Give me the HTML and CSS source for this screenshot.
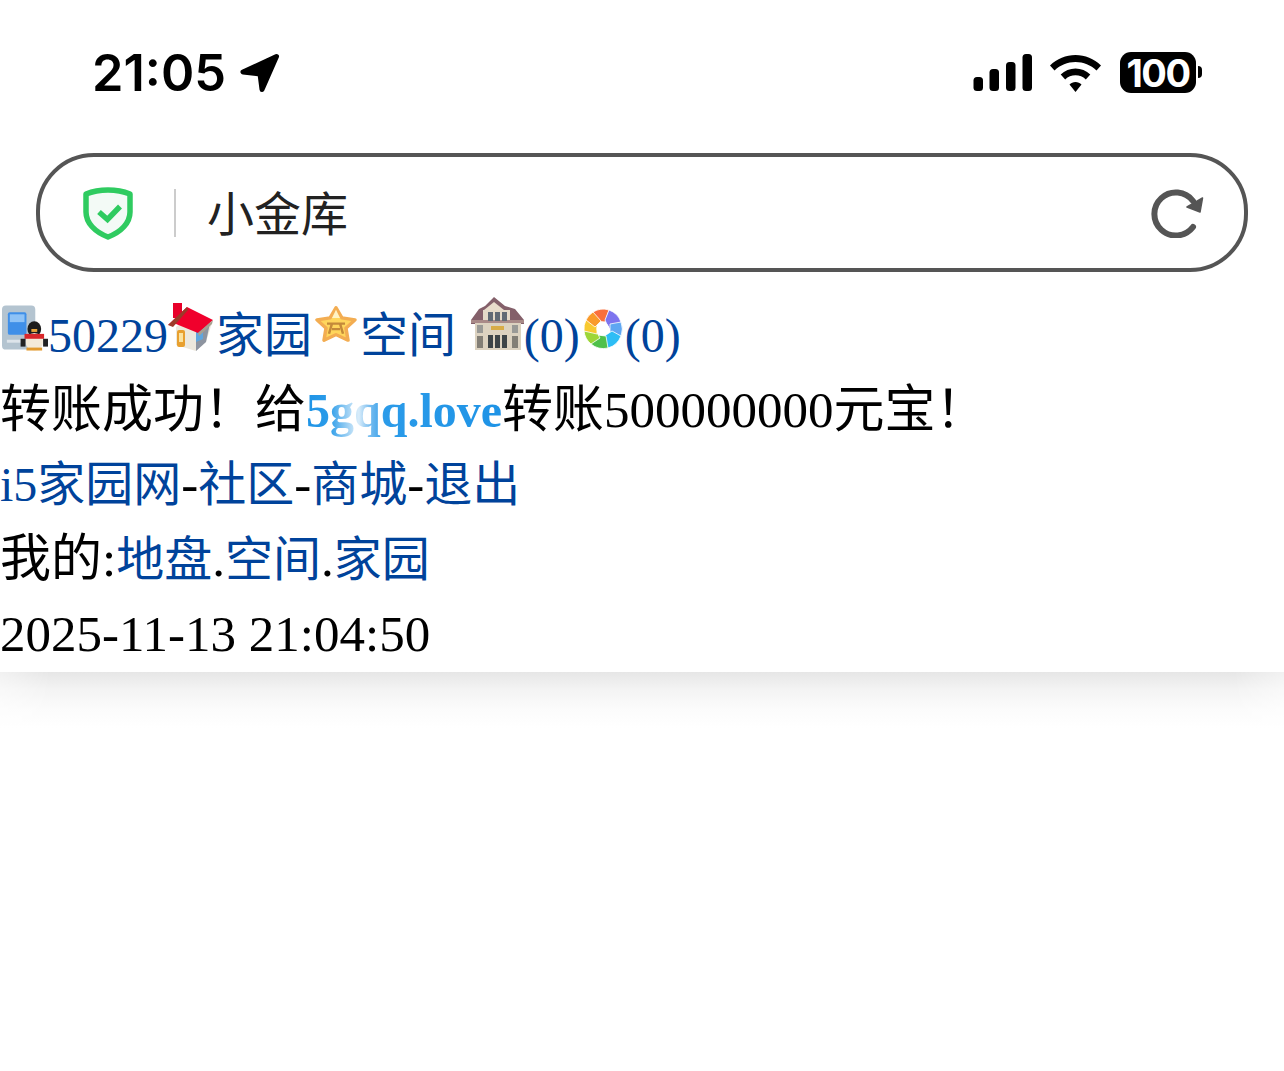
FILE: index.html
```html
<!DOCTYPE html>
<html lang="zh-CN">
<head>
  <meta charset="UTF-8" />
  <title>小金库</title>
  <meta name="viewport" content="width=device-width, initial-scale=1" />
  <link rel="stylesheet" href="styles.css">
</head>
<body>

  <!-- Status bar -->
  <header class="status-bar">
    <div class="status-left">
      <span class="clock">21:05</span>
      <svg class="arrow" viewBox="0 0 40 40"><path d="M36.500 3.500 L3 19 L20 21 L22 36.500 Z" fill="#000" stroke="#000" stroke-width="5" stroke-linejoin="round"/></svg>
    </div>
    <div class="status-right">
      <svg class="signal" viewBox="0 0 58 37">
        <rect x="0" y="23" width="9.500" height="14" rx="3.500"/>
        <rect x="16" y="15" width="9.500" height="22" rx="3.500"/>
        <rect x="32.500" y="8" width="9.500" height="29" rx="3.500"/>
        <rect x="49" y="0" width="9.500" height="37" rx="3.500"/>
      </svg>
      <svg class="wifi" viewBox="0 0 51 37">
        <path d="M25.500 0 C35 0 44 3.800 51 10.500 L46.500 15.500 C40.800 10 33.400 7 25.500 7 C17.600 7 10.200 10 4.500 15.500 L0 10.500 C7 3.800 16 0 25.500 0 Z"/>
        <path d="M25.500 13.500 C31 13.500 36.300 15.600 40.300 19.500 L35.800 24.400 C33 21.700 29.400 20.300 25.500 20.300 C21.600 20.300 18 21.700 15.200 24.400 L10.700 19.500 C14.700 15.600 20 13.500 25.500 13.500 Z"/>
        <path d="M25.500 27 C27.800 27 30 27.900 31.500 29.400 L25.500 37 L19.500 29.400 C21 27.900 23.200 27 25.500 27 Z"/>
      </svg>
      <div class="battery"><span class="battery-level">100</span></div>
      <span class="battery-cap"></span>
    </div>
  </header>

  <!-- Address bar -->
  <div class="address-bar">
    <svg class="shield" viewBox="0 0 50 53">
      <path d="M25 3 C32 3 40 4.200 47 7 L47 25 C47 36 38 45 25 50 C12 45 3 36 3 25 L3 7 C10 4.200 18 3 25 3 Z" fill="#f3faf6" stroke="#2fcb60" stroke-width="5.500" stroke-linejoin="round"/>
      <path d="M16 25 L24.500 32.500 L37 19.500" fill="none" stroke="#2fcb60" stroke-width="5.500"/>
    </svg>
    <span class="divider"></span>
    <span class="page-title">小金库</span>
    <svg class="reload" viewBox="0 0 54 50">
      <path d="M43 13 A21.500 21.500 0 1 0 43 39" fill="none" stroke="#555" stroke-width="6" stroke-linecap="round"/>
      <path d="M52.500 10 L37 19 L50 24 Z" fill="#555" stroke="#555" stroke-width="1.500" stroke-linejoin="round"/>
    </svg>
  </div>

  <!-- Page content -->
  <main class="content">
    <div class="line">
      <svg class="icon icon-qq" viewBox="0 0 47 47">
        <rect x="0" y="0" width="34" height="45" rx="4" fill="#b4c4d0"/>
        <rect x="6" y="7" width="19" height="23" rx="2" fill="#3f8fe8"/>
        <rect x="8" y="9" width="15" height="8" fill="#8ec2f6"/>
        <rect x="5" y="35" width="16" height="3" fill="#dde4ea"/>
        <ellipse cx="33" cy="24" rx="7" ry="8" fill="#1c1c1c"/>
        <ellipse cx="33" cy="37" rx="9" ry="9" fill="#f4ead8"/>
        <rect x="23" y="29" width="20" height="5" fill="#d9262a"/>
        <rect x="30" y="24" width="6" height="3" fill="#e8a33a"/>
        <rect x="19" y="34" width="5" height="8" fill="#222"/>
        <rect x="42" y="34" width="5" height="8" fill="#222"/>
        <rect x="25" y="43" width="16" height="3" fill="#e29a2e"/>
      </svg><a href="#">50229</a><svg class="icon icon-home" viewBox="0 0 46 49">
        <rect x="5" y="0" width="9" height="15" fill="#e8002a"/>
        <path d="M8 24 L22 12 L44 20 L38 39 L28 48 L8 42 Z" fill="#ece8dd"/>
        <path d="M28 28 L42 20 L38 39 L28 48 Z" fill="#8d94a0"/>
        <path d="M28 29 L35 26 L35 36 L28 39 Z" fill="#5fa6de"/>
        <rect x="9" y="27" width="8" height="17" rx="2" fill="#e8a02f"/>
        <rect x="11" y="30" width="4" height="9" fill="#fbe3a0"/>
        <path d="M0 22 L19 4 L45 17 L30 30 L8 21 Z" fill="#f0002c"/>
        <path d="M0 22 L19 4 L20 7 L5 24 Z" fill="#9c3a2a"/>
        <path d="M30 30 L45 17 L44 21 L31 33 Z" fill="#a8a090"/>
      </svg><a href="#">家园</a><svg class="icon icon-star" viewBox="0 0 44 41" preserveAspectRatio="none">
        <path d="M22 3 L28 14 L41 16 L32 25 L34 38 L22 32 L10 38 L12 25 L3 16 L16 14 Z" fill="#ffd65c" stroke="#f3ad52" stroke-width="3.500" stroke-linejoin="round"/>
        <path d="M22 5 L26 14 L18 14 Z" fill="#fff3c4"/>
        <path d="M13 20 H31 M18 20 L15 31 M26 20 L29 31 M18 26 H26" fill="none" stroke="#c48a3a" stroke-width="2.500"/>
      </svg><a href="#">空间</a> <svg class="icon icon-hall" viewBox="0 0 53 53">
        <path d="M23 0 L34 9 L44 12 L53 23 L53 27 L0 27 L0 23 L8 12 L14 9 Z" fill="#84606a"/>
        <path d="M23 5 L33 13 L13 13 Z" fill="#e9dccb"/>
        <rect x="4" y="25" width="46" height="28" fill="#dcd2c0"/>
        <rect x="12" y="13" width="27" height="12" fill="#e4dac8"/>
        <rect x="0" y="23" width="53" height="3" fill="#a98a88"/>
        <rect x="17" y="15" width="5" height="9" fill="#606a74"/>
        <rect x="24" y="15" width="5" height="9" fill="#606a74"/>
        <rect x="31" y="15" width="5" height="9" fill="#606a74"/>
        <rect x="6" y="28" width="6" height="8" fill="#9a9a96"/>
        <rect x="41" y="28" width="6" height="8" fill="#9a9a96"/>
        <rect x="20" y="29" width="13" height="4" fill="#d8ac48"/>
        <rect x="17" y="38" width="5" height="13" fill="#3d4448"/>
        <rect x="24" y="38" width="5" height="13" fill="#3d4448"/>
        <rect x="31" y="38" width="5" height="13" fill="#3d4448"/>
        <rect x="6" y="39" width="6" height="12" fill="#837f76"/>
        <rect x="41" y="39" width="6" height="12" fill="#837f76"/>
      </svg><a href="#">(0)</a><svg class="icon icon-lens" viewBox="0 0 40 40">
        <g stroke="#fff" stroke-width="0.800">
          <path d="M10 3 A19.500 19.500 0 0 1 26 1 L22 13 L13 12 Z" fill="#fa6f3c"/>
          <path d="M26 1 A19.500 19.500 0 0 1 38 13 L26 20 L22 11 Z" fill="#7d74ee"/>
          <path d="M38 13 A19.500 19.500 0 0 1 38 27 L27 26 L27 15 Z" fill="#5fa6f2"/>
          <path d="M38 27 A19.500 19.500 0 0 1 25 39 L20 28 L29 22 Z" fill="#2dbdf5"/>
          <path d="M25 39 A19.500 19.500 0 0 1 8 35 L14 26 L23 27 Z" fill="#4fc04a"/>
          <path d="M8 35 A19.500 19.500 0 0 1 1 22 L13 22 L17 29 Z" fill="#9dd638"/>
          <path d="M1 22 A19.500 19.500 0 0 1 3 11 L14 14 L14 25 Z" fill="#f8c92f"/>
          <path d="M3 11 A19.500 19.500 0 0 1 10 3 L18 12 L12 18 Z" fill="#f99a2a"/>
        </g>
        <circle cx="20" cy="20" r="6.500" fill="#fff"/>
      </svg><a href="#">(0)</a>
    </div>
    <div class="line">转账成功！给<span class="nick">5gqq.love</span>转账500000000元宝！</div>
    <div class="line"><a href="#">i5家园网</a>-<a href="#">社区</a>-<a href="#">商城</a>-<a href="#">退出</a></div>
    <div class="line">我的:<a href="#">地盘</a>.<a href="#">空间</a>.<a href="#">家园</a></div>
    <div class="line">2025-11-13 21:04:50</div>
  </main>
  <div class="content-shadow"></div>

</body>
</html>
```

FILE: styles.css
```css
/* Reset and base */
* {
  box-sizing: border-box;
  margin: 0;
  padding: 0;
}
html, body {
  background: #fff;
}
body {
  font-family: "Liberation Serif", "Noto Sans CJK SC", serif;
  font-size: 51px;
  color: #000;
}

/* Status bar */
.status-bar {
  height: 153px;
  padding: 52px 82px 0 92px;
  display: flex;
  justify-content: space-between;
  align-items: flex-start;
}
.status-left {
  display: flex;
  align-items: center;
  gap: 14px;
  height: 41px;
}
.clock {
  font-family: Inter, "Liberation Sans", sans-serif;
  font-size: 50.500px;
  font-weight: 600;
  line-height: 43px;
}
.arrow {
  width: 40px;
  height: 40px;
}
.status-right {
  display: flex;
  align-items: flex-start;
}
.signal {
  width: 59px;
  height: 37px;
  margin-top: 2px;
}
.wifi {
  width: 51px;
  height: 37px;
  margin: 3px 19px 0 18px;
}
.battery {
  width: 76px;
  height: 41px;
  background: #000;
  border-radius: 11px;
  display: flex;
  align-items: center;
  justify-content: center;
}
.battery-level {
  color: #fff;
  font-family: Inter, "Liberation Sans", sans-serif;
  font-size: 38px;
  font-weight: 700;
  letter-spacing: -1.500px;
}
.battery-cap {
  width: 4px;
  height: 12px;
  margin: 14px 0 0 2px;
  background: #000;
  border-radius: 0 4px 4px 0;
}

/* Address bar */
.address-bar {
  height: 119px;
  margin: 0 36px 25px;
  padding: 0 40px 0 43px;
  border: 4px solid #555;
  border-radius: 58px;
  display: flex;
  align-items: center;
}
.shield {
  width: 50px;
  height: 53px;
  margin-top: 2px;
}
.divider {
  width: 2px;
  height: 48px;
  margin: 0 31px 0 41px;
  background: #ccc;
}
.page-title {
  flex-grow: 1;
  padding-bottom: 4px;
  font-family: "Noto Sans CJK SC", sans-serif;
  font-size: 47px;
  font-weight: 400;
  color: #222;
}
.reload {
  width: 54px;
  height: 50px;
}

/* Page content */
.content-shadow {
  height: 56px;
  background: linear-gradient(#e6e6e6, #f3f3f3 30%, #fbfbfb 65%, #fff);
  -webkit-mask-image: linear-gradient(90deg, rgb(0 0 0 / 0.55), #000 50px, #000 calc(100% - 50px), rgb(0 0 0 / 0.55));
  mask-image: linear-gradient(90deg, rgb(0 0 0 / 0.55), #000 50px, #000 calc(100% - 50px), rgb(0 0 0 / 0.55));
}
.line {
  line-height: 74.7px;
  white-space: nowrap;
}
a {
  color: #00439b;
  font-size: 48px;
  line-height: 1;
  text-decoration: none;
}
.nick {
  font-size: 48px;
  font-weight: 700;
  line-height: 1;
  background: linear-gradient(90deg, #1e93e6 0%, #2b9ce9 12%, #bfe0f7 24%, #d8ecfa 27%, #7fc0f0 32%, #2b9be9 40%, #1e93e6 100%);
  -webkit-background-clip: text;
  background-clip: text;
  color: transparent;
}

/* Inline pictures */
.icon {
  filter: blur(0.6px);
}
.icon-qq {
  width: 46px;
  height: 47px;
  margin-left: 2px;
}
.icon-home {
  width: 46px;
  height: 49px;
  margin-right: 2px;
}
.icon-star {
  width: 44px;
  height: 38px;
  margin-left: 2px;
  margin-right: 2px;
  vertical-align: 9px;
}
.icon-hall {
  width: 53px;
  height: 53px;
  margin-left: 2px;
  vertical-align: 2px;
}
.icon-lens {
  width: 40px;
  height: 40px;
  margin-left: 3px;
  margin-right: 2px;
  vertical-align: 3px;
}
```
